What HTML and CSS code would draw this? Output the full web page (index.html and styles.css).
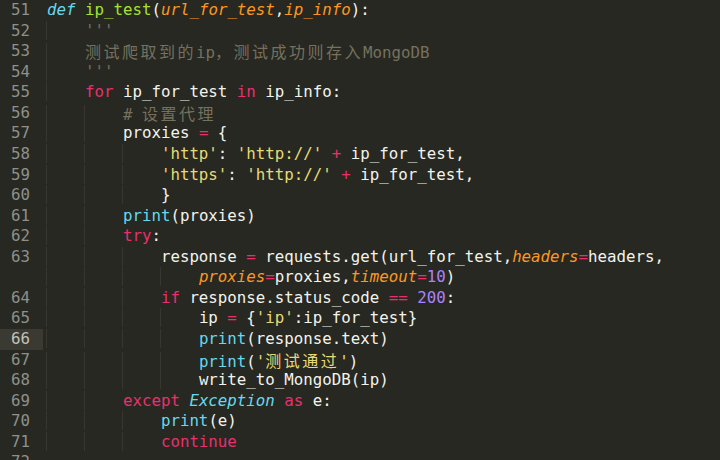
FILE: index.html
```html
<!DOCTYPE html>
<html>
<head>
<meta charset="utf-8">
<link rel="stylesheet" href="styles.css">
</head>
<body>
<div class="editor">
<div class="row"><span class="ln">51</span><span class="code"><span class="s">def</span> <span class="f">ip_test</span>(<span class="p">url_for_test</span>,<span class="p">ip_info</span>):</span></div>
<div class="row"><span class="ln">52</span><span class="code"><span class="g">    </span><span class="c">'''</span></span></div>
<div class="row"><span class="ln">53</span><span class="code"><span class="g">    </span><span class="c"><span class="cj">测试爬取到的</span>ip<span class="cj">，测试成功则存入</span>MongoDB</span></span></div>
<div class="row"><span class="ln">54</span><span class="code"><span class="g">    </span><span class="c">'''</span></span></div>
<div class="row"><span class="ln">55</span><span class="code"><span class="g">    </span><span class="k">for</span> ip_for_test <span class="k">in</span> ip_info:</span></div>
<div class="row"><span class="ln">56</span><span class="code"><span class="g">    </span><span class="g">    </span><span class="c"># <span class="cj">设置代理</span></span></span></div>
<div class="row"><span class="ln">57</span><span class="code"><span class="g">    </span><span class="g">    </span>proxies <span class="k">=</span> {</span></div>
<div class="row"><span class="ln">58</span><span class="code"><span class="g">    </span><span class="g">    </span><span class="g">    </span><span class="st">'http'</span>: <span class="st">'http://'</span> <span class="k">+</span> ip_for_test,</span></div>
<div class="row"><span class="ln">59</span><span class="code"><span class="g">    </span><span class="g">    </span><span class="g">    </span><span class="st">'https'</span>: <span class="st">'http://'</span> <span class="k">+</span> ip_for_test,</span></div>
<div class="row"><span class="ln">60</span><span class="code"><span class="g">    </span><span class="g">    </span><span class="g">    </span>}</span></div>
<div class="row"><span class="ln">61</span><span class="code"><span class="g">    </span><span class="g">    </span><span class="b">print</span>(proxies)</span></div>
<div class="row"><span class="ln">62</span><span class="code"><span class="g">    </span><span class="g">    </span><span class="k">try</span>:</span></div>
<div class="row"><span class="ln">63</span><span class="code"><span class="g">    </span><span class="g">    </span><span class="g">    </span>response <span class="k">=</span> requests.get(url_for_test,<span class="p">headers</span><span class="k">=</span>headers,</span></div>
<div class="row"><span class="ln"></span><span class="code"><span class="g">    </span><span class="g">    </span><span class="g">    </span><span class="g">    </span><span class="p">proxies</span><span class="k">=</span>proxies,<span class="p">timeout</span><span class="k">=</span><span class="n">10</span>)</span></div>
<div class="row"><span class="ln">64</span><span class="code"><span class="g">    </span><span class="g">    </span><span class="g">    </span><span class="k">if</span> response.status_code <span class="k">==</span> <span class="n">200</span>:</span></div>
<div class="row"><span class="ln">65</span><span class="code"><span class="g">    </span><span class="g">    </span><span class="g">    </span><span class="g">    </span>ip <span class="k">=</span> {<span class="st">'ip'</span>:ip_for_test}</span></div>
<div class="row current"><span class="ln">66</span><span class="code"><span class="g">    </span><span class="g">    </span><span class="g">    </span><span class="g">    </span><span class="b">print</span>(response.text)</span></div>
<div class="row"><span class="ln">67</span><span class="code"><span class="g">    </span><span class="g">    </span><span class="g">    </span><span class="g">    </span><span class="b">print</span>(<span class="st">'<span class="cj">测试通过</span>'</span>)</span></div>
<div class="row"><span class="ln">68</span><span class="code"><span class="g">    </span><span class="g">    </span><span class="g">    </span><span class="g">    </span>write_to_MongoDB(ip)</span></div>
<div class="row"><span class="ln">69</span><span class="code"><span class="g">    </span><span class="g">    </span><span class="k">except</span> <span class="e">Exception</span> <span class="k">as</span> e:</span></div>
<div class="row"><span class="ln">70</span><span class="code"><span class="g">    </span><span class="g">    </span><span class="g">    </span><span class="b">print</span>(e)</span></div>
<div class="row"><span class="ln">71</span><span class="code"><span class="g">    </span><span class="g">    </span><span class="g">    </span><span class="k">continue</span></span></div>
<div class="row"><span class="ln">72</span><span class="code"></span></div>
</div>
</body>
</html>
```

FILE: styles.css
```css
html, body {
  margin: 0;
  padding: 0;
  width: 720px;
  height: 460px;
  overflow: hidden;
  background: #272822;
}

.editor {
  display: flex;
  flex-direction: column;
  font-family: "DejaVu Sans Mono", "Liberation Mono", "Noto Sans CJK SC", monospace;
  font-size: 15.78px;
  color: #f3f3ec;
}

.row {
  display: flex;
  height: 20.57px;
  line-height: 20.57px;
  white-space: pre;
}

.ln {
  flex: none;
  width: 30px;
  padding-right: 13px;
  text-align: right;
  color: #8f908a;
}

.row.current .ln {
  background: #3a3a32;
  color: #c2c2bc;
}

.code {
  padding-left: 4px;
}

.g {
  box-shadow: inset 1px 0 0 #37372f;
  margin-left: -1px;
  padding-left: 1px;
}

.k { color: #e9306c; }
.s { color: #66d9ef; font-style: italic; }
.f { color: #a6e22e; }
.p { color: #fd971f; font-style: italic; }
.st { color: #e6db74; }
.c { color: #75715e; }
.n { color: #ae81ff; }
.b { color: #66d9ef; }
.e { color: #66d9ef; font-style: italic; }

.cj {
  font-family: "Noto Sans CJK SC", sans-serif;
  font-size: 16px;
  letter-spacing: 2.5px;
}
```
